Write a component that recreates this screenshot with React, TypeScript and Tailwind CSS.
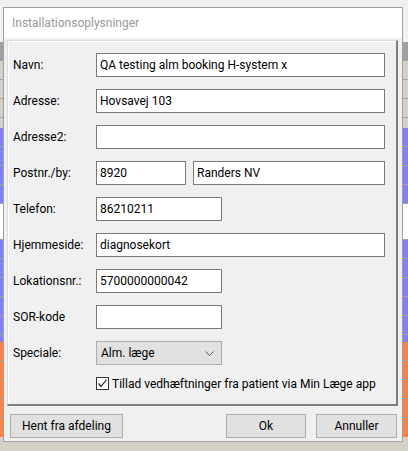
import React from "react";

const bgRows: string[] = [
  "h-[42px] bg-[#f0f0f0]",
  "h-[19px] bg-[#a0a0a0]",
  "h-[19px] bg-[#d4d0c8] border-b border-[#a0a0a0]",
  "h-[19px] bg-[#d4d0c8] border-b border-[#a0a0a0]",
  "h-[19px] bg-[#d4d0c8] border-b border-[#a0a0a0]",
  "h-[10px] bg-[#d4d0c8]",
  "h-[19px] bg-[#8080ff] border-b border-[#a0a0a0]",
  "h-[19px] bg-[#8080ff] border-b border-[#a0a0a0]",
  "h-[19px] bg-[#8080ff] border-b border-[#a0a0a0]",
  "h-[19px] bg-[#8080ff] border-b border-[#a0a0a0]",
  "h-[36px] bg-white border-b border-[#a0a0a0]",
  "h-[19px] bg-[#8080ff] border-b border-[#a0a0a0]",
  "h-[19px] bg-[#8080ff] border-b border-[#a0a0a0]",
  "h-[19px] bg-[#8080ff] border-b border-[#a0a0a0]",
  "h-[19px] bg-[#8080ff] border-b border-[#a0a0a0]",
  "h-[19px] bg-[#8080ff] border-b border-[#a0a0a0]",
  "h-[7px] bg-[#8080ff]",
  "h-[19px] bg-[#ff8040] border-b border-[#a0a0a0]",
  "h-[19px] bg-[#ff8040] border-b border-[#a0a0a0]",
  "h-[19px] bg-[#ff8040] border-b border-[#a0a0a0]",
  "h-[19px] bg-[#ff8040] border-b border-[#a0a0a0]",
  "h-[19px] bg-[#ff8040]",
  "flex-1 bg-[#d4d0c8]",
];

function Field({ value, className }: { value?: string; className: string }) {
  return (
    <div
      className={
        "h-[24px] border border-[#7a7a7a] bg-white pl-[3px] flex items-center text-[12px] text-black whitespace-nowrap overflow-hidden " +
        className
      }
    >
      {value}
    </div>
  );
}

function Row({ label, children }: { label: string; children: React.ReactNode }) {
  return (
    <div className="flex items-center h-[24px]">
      <div className="w-[83px] shrink-0 text-[12px] text-black">{label}</div>
      {children}
    </div>
  );
}

function Btn({ label, className }: { label: string; className: string }) {
  return (
    <div
      className={
        "h-[24px] border border-[#adadad] bg-[#e1e1e1] flex items-center justify-center text-[12px] text-black " +
        className
      }
    >
      {label}
    </div>
  );
}

export default function App() {
  return (
    <div className="relative w-[408px] h-[451px] overflow-hidden font-['Roboto',sans-serif]">
      <div className="flex flex-col h-full">
        {bgRows.map((c, i) => (
          <div key={i} className={"w-full shrink-0 " + c} />
        ))}
      </div>

      <div className="absolute left-[3px] top-[7px] w-[400px] h-[435px] border border-[#a0a0a0] flex flex-col bg-[#f0f0f0]">
        <div className="h-[30px] bg-white flex items-center pl-[8px] text-[12px] text-[#999999]">
          Installationsoplysninger
        </div>
        <div className="flex flex-col px-[3px] pt-[2px]">
          <div className="w-[391px] border-t border-l border-r-2 border-b-2 border-t-[#dcdcdc] border-l-[#dcdcdc] border-r-[#808080] border-b-[#808080] shadow-[inset_1px_1px_0_#ffffff] pl-[5px] pr-[11px] pt-[12px] pb-[14px] flex flex-col gap-[12px]">
            <Row label="Navn:">
              <Field value="QA testing alm booking H-system x" className="flex-1" />
            </Row>
            <Row label="Adresse:">
              <Field value="Hovsavej 103" className="flex-1" />
            </Row>
            <Row label="Adresse2:">
              <Field className="flex-1" />
            </Row>
            <Row label="Postnr./by:">
              <div className="flex-1 flex gap-[7px]">
                <Field value="8920" className="w-[90px]" />
                <Field value="Randers NV" className="flex-1" />
              </div>
            </Row>
            <Row label="Telefon:">
              <Field value="86210211" className="w-[126px]" />
            </Row>
            <Row label="Hjemmeside:">
              <Field value="diagnosekort" className="flex-1" />
            </Row>
            <Row label="Lokationsnr.:">
              <Field value="5700000000042" className="w-[126px]" />
            </Row>
            <Row label="SOR-kode">
              <Field className="w-[126px]" />
            </Row>
            <Row label="Speciale:">
              <div className="w-[126px] h-[24px] border border-[#adadad] bg-[#e1e1e1] flex items-center justify-between pl-[4px] pr-[7px] text-[12px] text-black">
                <span>Alm. læge</span>
                <svg width="9" height="5" viewBox="0 0 9 5">
                  <path d="M0.5 0.5 L4.5 4.5 L8.5 0.5" fill="none" stroke="#555" strokeWidth="1" />
                </svg>
              </div>
            </Row>
            <div className="flex items-center h-[13px] pl-[83px]">
              <div className="w-[13px] h-[13px] border border-[#333333] bg-white flex items-center justify-center">
                <svg width="11" height="11" viewBox="0 0 11 11">
                  <path d="M1.5 5.5 L4 8.5 L9.5 1.5" fill="none" stroke="#222" strokeWidth="1.2" />
                </svg>
              </div>
              <span className="ml-[3px] text-[12px] text-black whitespace-nowrap">
                Tillad vedhæftninger fra patient via Min Læge app
              </span>
            </div>
          </div>
        </div>
        <div className="flex items-center mt-[8px] pl-[6px] pr-[5px]">
          <Btn label="Hent fra afdeling" className="w-[113px]" />
          <div className="flex-1" />
          <Btn label="Ok" className="w-[80px]" />
          <Btn label="Annuller" className="w-[81px] ml-[10px]" />
        </div>
      </div>
    </div>
  );
}
